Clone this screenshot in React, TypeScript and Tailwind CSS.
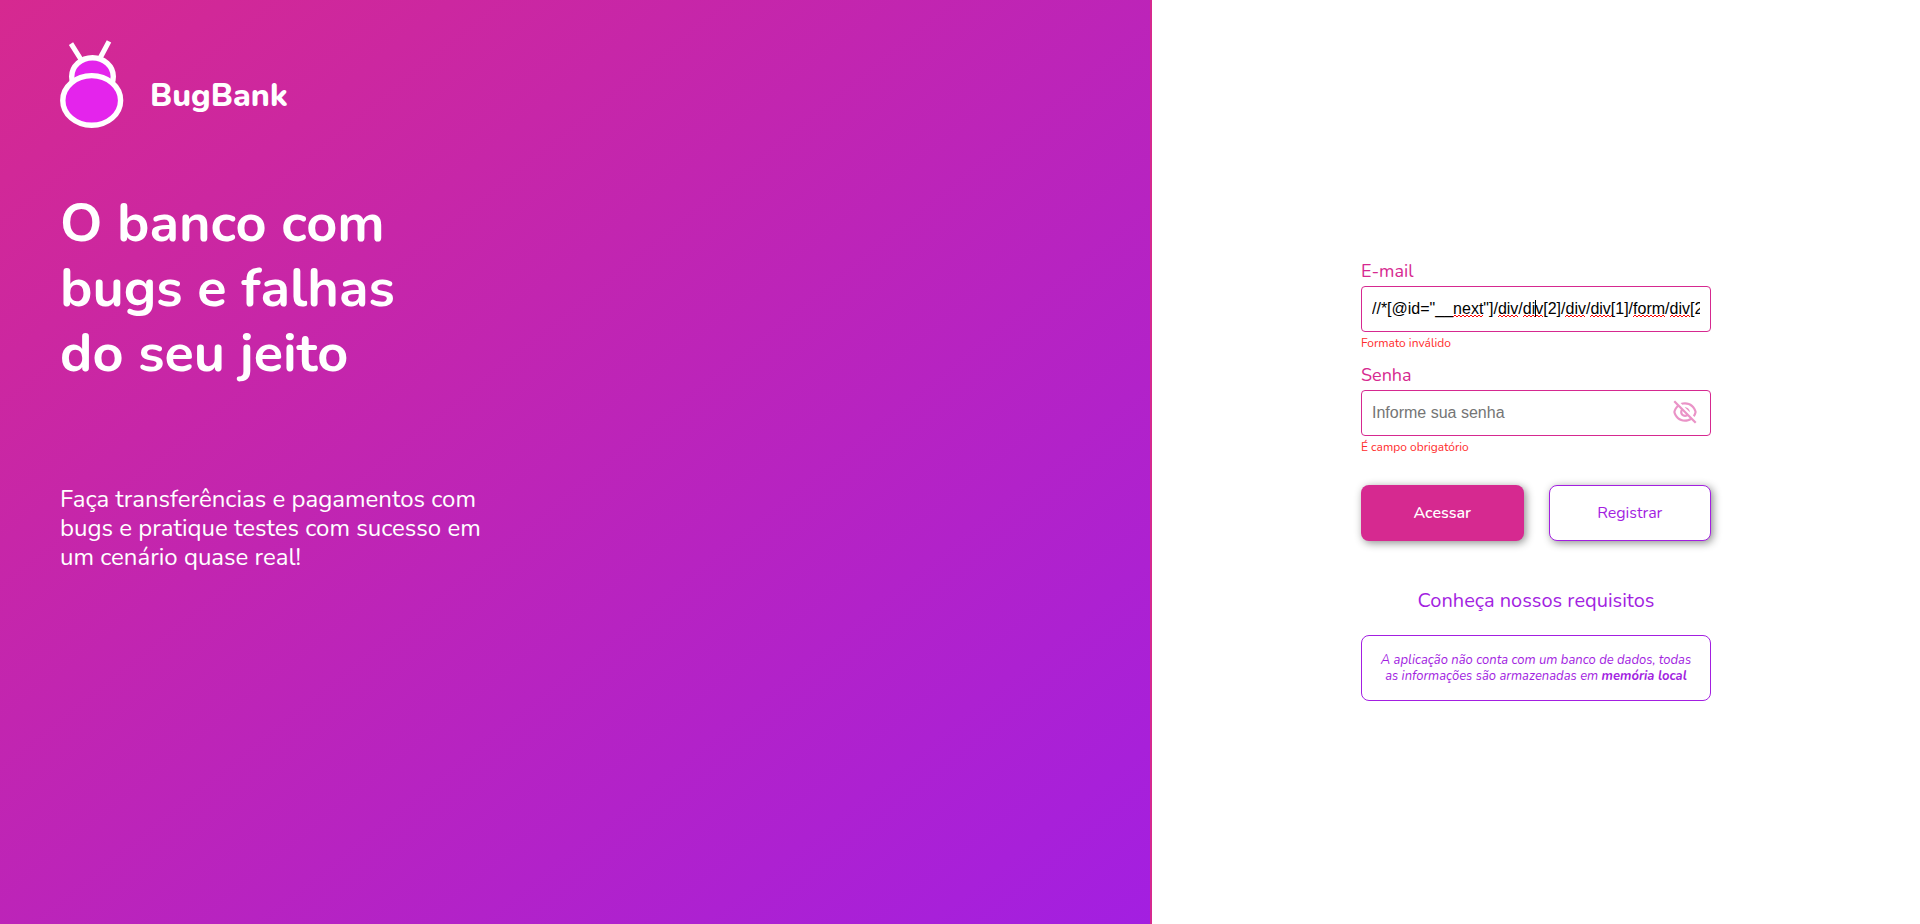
import { useState } from "react";
import { RiEyeLine, RiEyeOffLine } from "react-icons/ri";

const INITIAL_EMAIL =
  '//*[@id="__next"]/div/div[2]/div/div[1]/form/div[2]/input';

const MISSPELLED = [
  [92, 122],
  [137, 157],
  [162, 182],
  [204, 223],
  [229, 250],
  [272, 303],
  [309, 329],
];

function squiggle(from: number, to: number) {
  let d = `M${from} 20`;
  for (let x = from, up = true; x < to; x += 2, up = !up) {
    d += `L${x + 2} ${up ? 18 : 20}`;
  }
  return d;
}

function BugLogo() {
  return (
    <svg className="h-[90px] w-[64px] shrink-0" viewBox="60 40 64 90" fill="none" stroke="#fff" strokeWidth="5.4" aria-hidden="true">
      <path d="M71 43.6 81.6 60.5M109 41.3 99.6 59" strokeWidth="5" />
      <ellipse cx="92.5" cy="76.5" rx="20.8" ry="18.8" fill="#e424ec" />
      <ellipse cx="91.7" cy="100.4" rx="28.9" ry="24.8" fill="#e424ec" />
    </svg>
  );
}

export default function App() {
  const [email, setEmail] = useState(INITIAL_EMAIL);
  const [visible, setVisible] = useState(false);

  return (
    <div className="flex min-h-screen bg-white font-['Nunito','Open_Sans',sans-serif]">
      <section className="w-3/5 border-r-2 border-[#d62990] bg-[linear-gradient(to_bottom_right,#d62990,#a31fe1)] px-[60px] pt-10 text-white">
        <div className="flex items-center gap-[26px]">
          <BugLogo />
          <span className="pt-[22px] text-[32px] leading-10 font-extrabold">BugBank</span>
        </div>
        <h1 className="mt-[61px] max-w-[360px] text-[54px] leading-[65px] font-bold">
          O banco com bugs e falhas do seu jeito
        </h1>
        <p className="mt-[99px] max-w-[440px] text-2xl leading-[29px]">
          Faça transferências e pagamentos com bugs e pratique testes com sucesso em um cenário quase real!
        </p>
      </section>

      <main className="flex w-2/5 flex-col items-center justify-center pt-9">
        <div className="w-[350px]">
          <form onSubmit={(e) => e.preventDefault()}>
            <label htmlFor="email" className="block text-lg leading-6 text-[#d62990]">
              E-mail
            </label>
            <div className="relative mt-[3px]">
              <input
                id="email"
                type="text"
                value={email}
                spellCheck={false}
                onChange={(e) => setEmail(e.target.value)}
                className="block h-[46px] w-full rounded border border-[#d62990] px-[10px] font-['Liberation_Sans',Arial,sans-serif] text-base text-black outline-none"
              />
              {email === INITIAL_EMAIL && (
                <svg className="pointer-events-none absolute inset-0 h-full w-full" viewBox="0 0 350 46" fill="none" aria-hidden="true">
                  {MISSPELLED.map(([from, to]) => (
                    <path key={from} d={squiggle(from, to)} transform="translate(0 11)" stroke="#f00" />
                  ))}
                  <path d="M174.5 14v17" stroke="#000" />
                </svg>
              )}
            </div>
            <p className="mt-[3px] text-xs leading-4 text-[#ff2b2b]">Formato inválido</p>

            <label htmlFor="password" className="mt-3 block text-lg leading-6 text-[#d62990]">
              Senha
            </label>
            <div className="relative mt-[3px]">
              <input
                id="password"
                type={visible ? "text" : "password"}
                placeholder="Informe sua senha"
                className="block h-[46px] w-full rounded border border-[#d62990] pr-12 pl-[10px] font-['Liberation_Sans',Arial,sans-serif] text-base text-black outline-none placeholder:text-[#757575]"
              />
              <button
                type="button"
                aria-label="Mostrar senha"
                onClick={() => setVisible(!visible)}
                className="absolute top-[9px] right-[13px] text-[#d62990] opacity-50"
              >
                {visible ? <RiEyeLine className="size-[26px]" /> : <RiEyeOffLine className="size-[26px]" />}
              </button>
            </div>
            <p className="mt-[3px] text-xs leading-4 text-[#ff2b2b]">É campo obrigatório</p>

            <div className="mt-[30px] grid grid-cols-2 gap-[25px]">
              <button type="submit" className="h-14 rounded-lg bg-[#d62990] text-base font-semibold text-white shadow-[2px_2px_8px_rgba(0,0,0,0.45)]">
                Acessar
              </button>
              <button type="button" className="h-14 rounded-lg border border-[#a31fe1] bg-white text-base text-[#a31fe1] shadow-[2px_2px_8px_rgba(0,0,0,0.45)]">
                Registrar
              </button>
            </div>
          </form>

          <a href="#requisitos" className="mt-[46px] block text-center text-xl leading-7 text-[#a31fe1]">
            Conheça nossos requisitos
          </a>
          <p className="mt-5 rounded-lg border border-[#a31fe1] px-[18px] py-4 text-center text-[13px] leading-4 text-[#a31fe1] italic">
            A aplicação não conta com um banco de dados, todas as informações são armazenadas em{" "}
            <strong className="font-bold">memória local</strong>
          </p>
        </div>
      </main>
    </div>
  );
}
